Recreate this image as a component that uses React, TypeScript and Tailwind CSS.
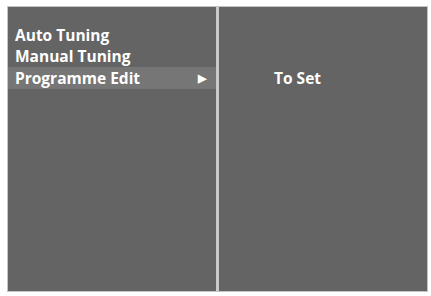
export default function App() {
  return (
    <div
      className="h-[296px] w-[431px] bg-white pt-[6px] pl-[7px] pr-[3px] pb-[4px]"
      style={{ fontFamily: '"Open Sans", "Noto Sans", sans-serif' }}
    >
      <div className="flex h-full border border-[#c4c4c4] bg-[#cacaca]">
        <div className="w-[208px] bg-[#646464] pt-[18px]">
          <div className="px-[7px] text-[15.5px] font-bold leading-[21px] text-white">Auto Tuning</div>
          <div className="px-[7px] text-[15.5px] font-bold leading-[21px] text-white">Manual Tuning</div>
          <div className="flex items-center justify-between bg-[#767676] pl-[7px] pr-[10px] text-[15.5px] font-bold leading-[22px] text-white">
            <span>Programme Edit</span>
            <span className="text-[11px]">▶</span>
          </div>
        </div>
        <div className="ml-[3px] flex-1 bg-[#646464] pt-[60px] pl-[55px]">
          <div className="text-[15.5px] font-bold leading-[22px] text-white">To Set</div>
        </div>
      </div>
    </div>
  );
}
